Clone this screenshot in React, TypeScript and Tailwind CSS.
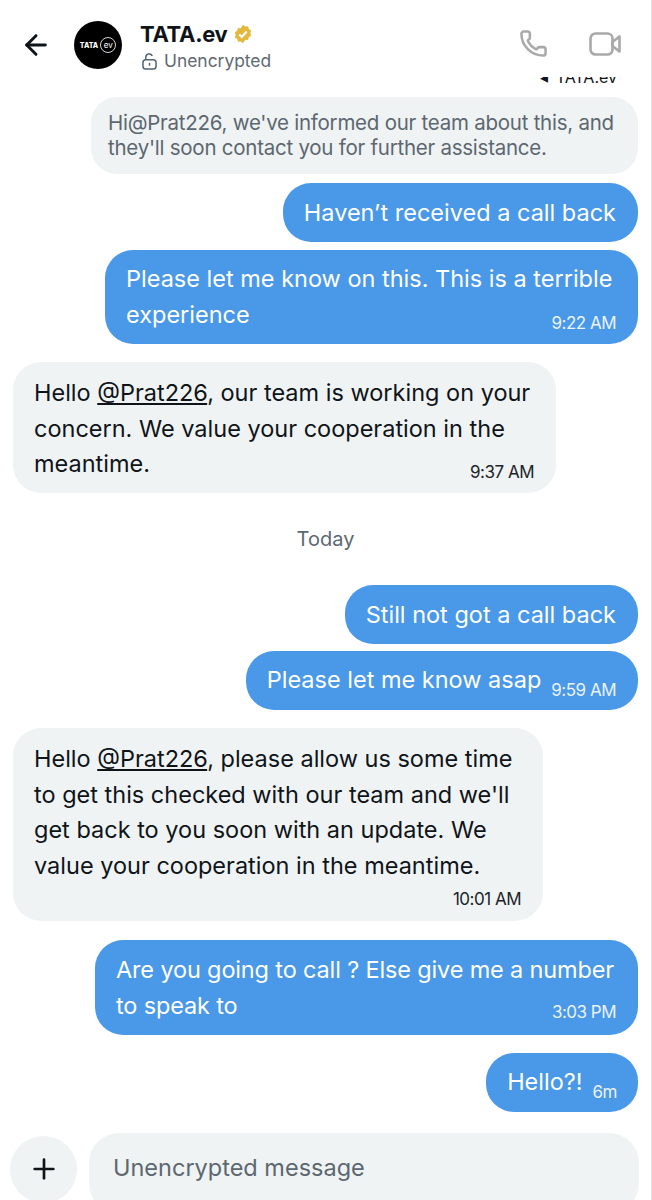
import { ArrowLeft, Phone, Plus } from "lucide-react";
import type { ReactNode } from "react";

const Mention = () => <span className="underline underline-offset-2">@Prat226</span>;

const Time = ({ children, light }: { children: ReactNode; light?: boolean }) => (
  <span className={`text-[17px] tracking-[-0.5px] leading-none ${light ? "text-[#eaf3fc]" : "text-[#1c2329]"}`}>{children}</span>
);

const Sent = ({ children, time, className, timeClass }: { children: ReactNode; time?: string; className: string; timeClass?: string }) => (
  <div className={`self-end bg-[#4a98e8] text-white rounded-[28px] whitespace-nowrap ${className}`}>
    <div className="leading-[36px]">{children}</div>
    {time && (
      <div className={`flex justify-end leading-none ${timeClass}`}>
        <Time light>{time}</Time>
      </div>
    )}
  </div>
);

// bubble where the time sits on the same row as the text
const SentInline = ({ text, time, className }: { text: string; time: string; className: string }) => (
  <div className={`self-end bg-[#4a98e8] text-white rounded-[28px] whitespace-nowrap h-[59px] pt-[11px] flex items-start ${className}`}>
    <span className="leading-[36px]">{text}</span>
    <span className="mt-[14px] leading-none"><Time light>{time}</Time></span>
  </div>
);

const Received = ({ children, time, className, timeClass }: { children: ReactNode; time: string; className: string; timeClass: string }) => (
  <div className={`self-start bg-[#eff3f4] text-[#0f1419] rounded-[28px] whitespace-nowrap ${className}`}>
    <div className="leading-[35.5px]">{children}</div>
    <div className={`flex justify-end leading-none ${timeClass}`}>
      <Time>{time}</Time>
    </div>
  </div>
);

export default function App() {
  return (
    <div className="w-[652px] h-[1200px] overflow-hidden bg-white border-r border-[#e4e4e4] flex flex-col text-[23.5px] font-['Inter',sans-serif]">
      <header className="h-[77px] shrink-0 flex items-start pl-[20px] pr-[30px] pt-[21px] bg-white relative z-10">
        <ArrowLeft className="w-[32px] h-[32px] mt-[8px] text-[#0f1419]" strokeWidth={2.2} />
        <div className="ml-[22px] w-[48px] h-[48px] rounded-full bg-black flex items-center justify-center gap-[2px]">
          <span className="text-[7px] font-extrabold text-white leading-none">TATA</span>
          <span className="w-[16px] h-[16px] rounded-full border border-gray-300 text-[8px] text-white flex items-center justify-center leading-none">ev</span>
        </div>
        <div className="ml-[18px] -mt-[2px]">
          <div className="flex items-center gap-[5px] text-[22px] font-bold leading-[30px] text-[#0f1419] tracking-[-0.3px]">
            TATA.ev
            <svg viewBox="0 0 24 24" className="w-[20px] h-[20px]">
              <path fill="#e2b93b" d="M12 1l2.7 2 3.3-.3 1 3.2 2.8 1.8-1 3.2 1 3.2-2.8 1.8-1 3.2-3.3-.3L12 23l-2.7-2-3.3.3-1-3.2-2.8-1.8 1-3.2-1-3.2 2.8-1.8 1-3.2 3.3.3z" />
              <path fill="none" stroke="#fff" strokeWidth="2.6" d="M7.5 12.5l3 3 6-6.5" />
            </svg>
          </div>
          <div className="flex items-center gap-[7px] text-[17.4px] leading-[24px] text-[#606a72] ml-[2px]">
            <svg viewBox="0 0 16 18" className="w-[15px] h-[17px]" fill="none" stroke="#536471" strokeWidth="1.6">
              <rect x="1" y="7" width="14" height="10" rx="3" />
              <path d="M4 7V4.5a3.7 3.7 0 0 1 7-1.5" />
              <path d="M8 10.5v3" />
            </svg>
            Unencrypted
          </div>
        </div>
        <div className="ml-auto flex items-center gap-[41px] pt-[8px]">
          <Phone className="w-[29px] h-[29px] text-[#a9a9a9]" strokeWidth={2.1} />
          <svg viewBox="0 0 32 24" className="w-[32px] h-[24px]" fill="none" stroke="#a9a9a9" strokeWidth="2.6" strokeLinejoin="round">
            <rect x="1.5" y="1.5" width="22" height="21" rx="5" />
            <path d="M23.5 10l7-5.5v15l-7-5.5z" />
          </svg>
        </div>
      </header>

      <main className="flex-1 min-h-0 flex flex-col pl-[13px] pr-[13px] relative">
        <div className="absolute right-[34px] top-0 h-[7px] overflow-hidden text-[16px] leading-none text-[#0f1419] whitespace-nowrap">
          <div className="-mt-[8px]"><span className="mr-[3px]">◂</span> TATA.ev</div>
        </div>
        <div className="self-end mt-[20px] w-[547px] h-[77px] bg-[#eff3f4] rounded-[26px] pl-[17px] pt-[13px] text-[20.5px] tracking-[-0.25px] leading-[25px] text-[#5d6770] whitespace-nowrap">
          Hi@Prat226, we've informed our team about this, and<br />they'll soon contact you for further assistance.
        </div>
        <Sent className="mt-[9px] h-[59px] pl-[21px] pr-[22px] pt-[12px]">Haven’t received a call back</Sent>
        <Sent className="mt-[8px] w-[533px] h-[94px] pl-[21px] pr-[22px] pt-[11px]" time="9:22 AM" timeClass="-mt-[18px]">
          Please let me know on this. This is a terrible<br />experience
        </Sent>
        <Received className="mt-[18px] w-[543px] h-[131px] pl-[21px] pr-[22px] pt-[13px]" time="9:37 AM" timeClass="-mt-[18px]">
          Hello <Mention />, our team is working on your<br />concern. We value your cooperation in the<br />meantime.
        </Received>
        <div className="mt-[32px] text-center text-[20px] leading-[28px] text-[#5d6770]">Today</div>
        <Sent className="mt-[32px] h-[59px] pl-[21px] pr-[22px] pt-[12px]">Still not got a call back</Sent>
        <SentInline className="mt-[7px] pl-[21px] pr-[22px] gap-[10px]" text="Please let me know asap" time="9:59 AM" />
        <Received className="mt-[18px] w-[530px] h-[193px] pl-[21px] pr-[22px] pt-[13px]" time="10:01 AM" timeClass="mt-[8px]">
          Hello <Mention />, please allow us some time<br />to get this checked with our team and we'll<br />get back to you soon with an update. We<br />value your cooperation in the meantime.
        </Received>
        <Sent className="mt-[19px] w-[543px] h-[95px] pl-[21px] pr-[22px] pt-[12px] tracking-[-0.15px]" time="3:03 PM" timeClass="-mt-[20px]">
          Are you going to call ? Else give me a number<br />to speak to
        </Sent>
        <SentInline className="mt-[18px] pl-[21px] pr-[21px] gap-[10px]" text="Hello?!" time="6m" />
      </main>

      <footer className="h-[88px] shrink-0 flex items-start pl-[10px] pr-[12px] pt-[21px] gap-[12px]">
        <button className="w-[67px] h-[67px] mt-[3px] rounded-full bg-[#eff3f4] flex items-center justify-center shrink-0 pb-[2px]">
          <Plus className="w-[32px] h-[32px] text-[#0f1419]" strokeWidth={2} />
        </button>
        <div className="flex-1 h-[80px] rounded-[30px] bg-[#eff3f4] pl-[24px] pt-[18px] leading-[34px] text-[#5d6770]">
          Unencrypted message
        </div>
      </footer>
    </div>
  );
}
